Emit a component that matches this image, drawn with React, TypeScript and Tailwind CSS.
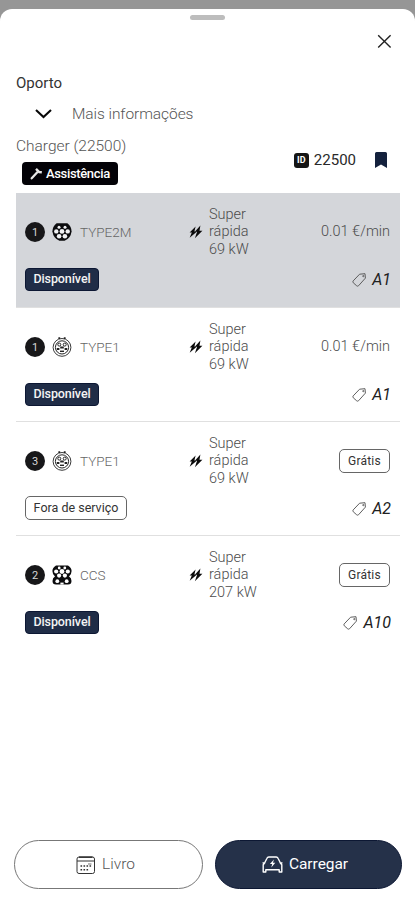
import React from 'react';

type PlugKind = 'type2' | 'type1' | 'ccs';

interface Connector {
  id: number;
  plug: PlugKind;
  name: string;
  power: string;
  price: string | null;
  available: boolean;
  tag: string;
}

const connectors: Connector[] = [
  { id: 1, plug: 'type2', name: 'TYPE2M', power: '69 kW', price: '0.01 €/min', available: true, tag: 'A1' },
  { id: 1, plug: 'type1', name: 'TYPE1', power: '69 kW', price: '0.01 €/min', available: true, tag: 'A1' },
  { id: 3, plug: 'type1', name: 'TYPE1', power: '69 kW', price: null, available: false, tag: 'A2' },
  { id: 2, plug: 'ccs', name: 'CCS', power: '207 kW', price: null, available: true, tag: 'A10' },
];

function PlugIcon({ kind }: { kind: PlugKind }) {
  if (kind === 'type2') {
    return (
      <svg width="20" height="20" viewBox="0 0 20 20">
        <path d="M4.6 1.2h10.8Q19.6 4.6 19.6 9.5 18.6 16.4 12.6 18.8H7.4Q1.4 16.4.4 9.5.4 4.6 4.6 1.2Z" fill="#0c0c0e" />
        <g fill="#f1f2f4">
          <circle cx="7" cy="5.3" r="1.5" />
          <circle cx="13" cy="5.3" r="1.5" />
          <circle cx="4.3" cy="9.4" r="2.2" />
          <circle cx="10" cy="9.4" r="2.4" />
          <circle cx="15.7" cy="9.4" r="2.2" />
          <circle cx="7.1" cy="14.2" r="2.3" />
          <circle cx="12.9" cy="14.2" r="2.3" />
        </g>
      </svg>
    );
  }
  if (kind === 'type1') {
    return (
      <svg width="20" height="20" viewBox="0 0 20 20" fill="none" stroke="#242424">
        <path d="M7.3 2V.2M12.7 2V.2" strokeWidth="1.8" />
        <circle cx="10" cy="10.4" r="8.9" strokeWidth=".9" />
        <circle cx="10" cy="10.4" r="6.6" strokeWidth="1" />
        <circle cx="7.3" cy="7.6" r="1.5" strokeWidth="1" />
        <circle cx="12.7" cy="7.6" r="1.5" strokeWidth="1" />
        <path d="M8.2 10.5h3.6" strokeWidth="2" />
        <path d="M4.8 12h2.6M12.6 12h2.6" strokeWidth="1.9" />
        <path d="M8 14.3h4" strokeWidth="1.4" />
      </svg>
    );
  }
  return (
    <svg width="20" height="20" viewBox="0 0 20 20">
      <path d="M4 .5h12Q19.6 2.6 19.6 6q0 3.2-2.6 5.6 2.5 1.2 2.5 4.4 0 3.5-3.5 3.5H4Q.5 19.5.5 16q0-3.2 2.5-4.4Q.4 9.2.4 6 .4 2.6 4 .5Z" fill="#0c0c0e" />
      <g fill="#fff">
        <circle cx="7.2" cy="3" r="1.4" />
        <circle cx="12.8" cy="3" r="1.4" />
        <circle cx="4.2" cy="6.5" r="2.1" />
        <circle cx="10" cy="6.5" r="2.4" />
        <circle cx="15.8" cy="6.5" r="2.1" />
        <circle cx="7.1" cy="10.6" r="2.1" />
        <circle cx="12.9" cy="10.6" r="2.1" />
        <circle cx="5.3" cy="16.2" r="1.9" />
        <circle cx="14.7" cy="16.2" r="1.9" />
        <path d="M8.4 17.6h3.2v1.9H8.4z" />
      </g>
    </svg>
  );
}

function BoltsIcon() {
  return (
    <svg width="14" height="14" viewBox="0 0 14 14" fill="#0b0b0b">
      <path d="M6.6 1.6.6 7.4h2.2L.7 12.8 8 6.4H5.4Z" />
      <path d="M11.4.4 5.8 6.8h2.3l-2.2 6.4L13.4 5.8h-2.9Z" />
    </svg>
  );
}

function TagIcon() {
  return (
    <svg width="16" height="16" viewBox="0 0 16 16" fill="none" stroke="#555" strokeWidth=".95" strokeLinejoin="round">
      <path d="M8.6 2.2 14 1.7l.4 4.4-6.8 7.6q-.9.9-1.9.1l-3.4-3q-.9-.9-.1-1.9Z" />
      <circle cx="12.3" cy="4.1" r=".6" />
    </svg>
  );
}

function ConnectorRow({ item, selected, last }: { item: Connector; selected: boolean; last: boolean }) {
  return (
    <div className={`flex flex-col pl-[9px] pt-[13px] ${selected ? 'h-[115px] bg-[#d4d6da]' : 'h-[114px]'} ${last ? '' : 'border-b border-[#e0e0e0]'}`}>
      <div className="flex h-[52px] items-center">
        <div className="flex w-[164px] items-center">
          <span className="flex size-[20px] items-center justify-center rounded-full bg-[#171719] text-[11px] leading-none text-[#d8d8d8]">{item.id}</span>
          <span className="ml-[7px]"><PlugIcon kind={item.plug} /></span>
          <span className="ml-[8px] text-[13.5px] font-light text-[#666]">{item.name}</span>
        </div>
        <BoltsIcon />
        <p className="ml-[6px] w-[70px] text-[14.5px] font-light leading-[17.3px] text-[#4c4c4c]">
          Super<br />rápida<br />{item.power}
        </p>
        <div className="flex flex-1 justify-end pr-[10px]">
          {item.price ? (
            <span className="text-[14.5px] font-light text-[#4c4c4c]">{item.price}</span>
          ) : (
            <span className="flex h-[24px] w-[51px] items-center justify-center rounded-[5px] border border-[#666] text-[12px] tracking-[0.2px] text-[#333]">Grátis</span>
          )}
        </div>
      </div>
      <div className="mt-[9px] flex h-[24px] items-center justify-between pr-[9px]">
        {item.available ? (
          <span className="flex h-[23px] w-[74px] items-center justify-center rounded-[4px] border border-[#0c1733] bg-[#202d47] text-[12.5px] font-medium tracking-[-0.1px] text-[#f4f4f4]">Disponível</span>
        ) : (
          <span className="flex h-[24px] w-[102px] items-center justify-center rounded-[5px] border border-[#666] text-[12.5px] text-[#333]">Fora de serviço</span>
        )}
        <span className="flex items-center gap-[5px] pt-[1px] text-[16px] italic leading-none text-[#202020]"><TagIcon />{item.tag}</span>
      </div>
    </div>
  );
}

export default function App() {
  return (
    <div className="h-[900px] w-full overflow-hidden bg-[#969696] pt-[9px] font-['Roboto',sans-serif]">
      <main className="flex h-[891px] flex-col rounded-t-[12px] bg-white">
        <div className="flex h-[12px] justify-center pt-[6px]"><div className="h-[5px] w-[35px] rounded-full bg-[#bdbdbd]" /></div>
        <div className="flex h-[42px] justify-end pr-[23px] pt-[13px]">
          <svg width="15" height="15" viewBox="0 0 15 15" stroke="#222" strokeWidth="1.4"><path d="m1.2 1.2 12.4 12.4M13.6 1.2 1.2 13.6" /></svg>
        </div>
        <h1 className="h-[40px] shrink-0 px-4 pt-[9px] text-[15px] leading-[22px] text-[#333]">Oporto</h1>
        <div className="flex h-[22px] items-center pl-[35px]">
          <svg width="17" height="10" viewBox="0 0 17 10" fill="none" stroke="#080808" strokeWidth="2.1"><path d="m1 1 7.5 7L16 1" /></svg>
          <span className="ml-[20px] pt-[2px] text-[15.5px] font-light tracking-[-0.07px] text-[#555]">Mais informações</span>
        </div>
        <section className="flex h-[68px] shrink-0 justify-between px-4 pt-[11px]">
          <div>
            <p className="text-[15.5px] font-light leading-[20px] tracking-[-0.02px] text-[#555]">Charger (22500)</p>
            <div className="ml-[6px] mt-[6px] flex h-[23px] w-[96px] items-center rounded-[4px] bg-[#030207] pl-[8px] text-[13px] font-medium tracking-[-0.35px] text-white">
              <svg className="mr-[3px]" width="13" height="13" viewBox="0 0 13 13" fill="none" stroke="#e8e8e8">
                <path d="m1.7 11.3 5.6-6" strokeWidth="2.3" strokeLinecap="round" />
                <path d="M6 1.8 9.2 5l2.6.2" strokeWidth="2.4" />
              </svg>
              Assistência
            </div>
          </div>
          <div className="mt-[12px] flex h-[24px] items-center pr-[12px]">
            <span className="flex h-[15px] w-[15px] items-center justify-center rounded-[3px] bg-[#151515] text-[9px] font-bold leading-none text-white">ID</span>
            <span className="ml-[5px] text-[15px] leading-none text-[#292929]">22500</span>
            <svg className="ml-[19px]" width="12" height="16" viewBox="0 0 12 16" fill="#14213d"><path d="M1.5 0h9Q12 0 12 1.5V16l-6-3.5L0 16V1.5Q0 0 1.5 0Z" /></svg>
          </div>
        </section>
        <section className="ml-4 mr-[15px]">
          {connectors.map((item, i) => <ConnectorRow key={i} item={item} selected={i === 0} last={i === 3} />)}
        </section>
        <footer className="mt-auto flex gap-[12px] pb-[11px] pl-[14px] pr-[13px]">
          <button className="flex h-[49px] w-[189px] items-center justify-center gap-[6px] rounded-full border border-[#777] pr-[6px] text-[15.5px] font-light text-[#555]">
            <svg width="20" height="20" viewBox="0 0 20 20" fill="none" stroke="#333">
              <rect x="1" y="2" width="17.5" height="16.5" rx="2" />
              <path d="M1 6h17.5" />
              <path d="M3 2.2h13.5" strokeWidth="1.5" />
              <path d="M4.5 11h11M4.5 14.8h8" strokeWidth="1.6" strokeDasharray="1.6 1.4" />
              <path d="M12 9h3.5" strokeWidth=".7" />
            </svg>
            Livro
          </button>
          <button className="flex h-[49px] flex-1 items-center justify-center gap-[6px] rounded-full border border-[#0c1733] bg-[#253149] pr-[7px] text-[15.5px] tracking-[-0.05px] text-white">
            <svg width="21" height="17" viewBox="0 0 21 17" fill="none" stroke="#fff" strokeWidth="1.4" strokeLinejoin="round">
              <path d="M2.7 6.8 5 2.3Q5.5 1 6.8 1h7.4q1.3 0 1.8 1.3l2.3 4.5" />
              <path d="M3 6.5 1.2 8.8v7.2h2.6v-2.3h13.4V16h2.6V8.8L18 6.5M.5 6.9h2M18.5 6.9h2" />
              <path d="M11.9 3.6 7.9 8h2.3l-.9 3.4 4-4.7H11Z" fill="#fff" stroke="none" />
            </svg>
            Carregar
          </button>
        </footer>
      </main>
    </div>
  );
}
